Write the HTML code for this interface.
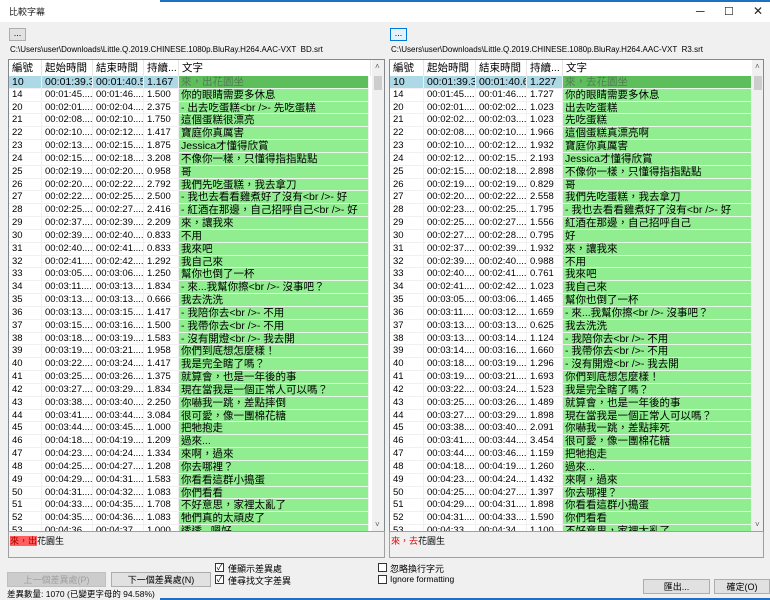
<!DOCTYPE html><html><head><meta charset="utf-8"><style>
*{margin:0;padding:0;box-sizing:border-box}
body{width:770px;height:600px;overflow:hidden;background:#f0f0f0;font-family:"Liberation Sans","Noto Sans CJK TC",sans-serif;position:relative;color:#000}
.abs{position:absolute}
.title{left:0;top:0;width:770px;height:22px;background:#fff}
.blue{left:160px;top:0;width:610px;height:2px;background:#1e6fc6}
.tt{left:9px;top:5px;font-size:9px;color:#222}
.ctl{top:4px;font-size:12px;color:#222}
.btn{background:#e1e1e1;border:1px solid #adadad;font-size:9px;text-align:center;line-height:14px}
.path{font-size:8px;color:#000;white-space:nowrap}
.list{border:1px solid #828790;background:#fff;overflow:hidden}
.hdr{position:absolute;left:0;top:0;height:16px;display:flex;font-size:10.5px;line-height:16px;color:#000}
.hdr div{padding-left:3px;border-right:1px solid #e5e5e5;white-space:nowrap;overflow:hidden}
.rows{position:absolute;left:0;top:16px}
.r{display:flex;height:12.83px;font-size:9.5px;line-height:12.83px;white-space:nowrap}
.r div{overflow:hidden;padding-left:3px;border-right:1px solid #f0f0f0;border-bottom:1px solid #f0f0f0}
.r div:last-child{background:#90ee90;font-size:10.5px;border-bottom:1px solid #e9f7e9;padding-left:2px}
.r.s div{background:#add8e6;font-size:10.5px}
.r.s div:last-child{background:#5cbf5c;color:#557a55}
.sb{position:absolute;top:0;width:12px;bottom:0;background:#f0f0f0}
.thumb{position:absolute;left:2px;top:16px;width:8px;height:14px;background:#cdcdcd}
.tb{background:#f0f0f0;border:1px solid #a0a0a0;font-size:9px;padding:2px 1px}
.cb{width:9px;height:9px;border:1px solid #333;background:#fff;font-size:8px;line-height:7px;text-align:center}
.lbl{font-size:9px}
</style></head><body>
<div class="abs title"></div><div class="abs blue"></div>
<div class="abs tt">比較字幕</div>
<div class="abs ctl" style="left:696px">─</div>
<div class="abs ctl" style="left:724px;font-size:11px;top:5px">☐</div>
<div class="abs ctl" style="left:753px">✕</div>

<div class="abs btn" style="left:9px;top:28px;width:17px;height:13px;line-height:8px">...</div>
<div class="abs btn" style="left:390px;top:28px;width:17px;height:13px;line-height:8px;border-color:#0078d7;background:#e5f1fb">...</div>
<div class="abs path" style="left:10px;top:45px">C:\Users\user\Downloads\Little.Q.2019.CHINESE.1080p.BluRay.H264.AAC-VXT&nbsp; BD.srt</div>
<div class="abs path" style="left:391px;top:45px">C:\Users\user\Downloads\Little.Q.2019.CHINESE.1080p.BluRay.H264.AAC-VXT&nbsp; R3.srt</div>

<!-- LEFT LIST -->
<div class="abs list" style="left:8px;top:59px;width:377px;height:473px">
<div class="hdr"><div style="width:33px">編號</div><div style="width:51px">起始時間</div><div style="width:51px">結束時間</div><div style="width:35px">持續...</div><div style="width:192px">文字</div></div>
<div class="rows">
<div class="r s"><div style="width:33px">10</div><div style="width:51px">00:01:39.33</div><div style="width:51px">00:01:40.50</div><div style="width:35px">1.167</div><div style="width:190px">來，出花園坐</div></div>
<div class="r"><div style="width:33px">14</div><div style="width:51px">00:01:45....</div><div style="width:51px">00:01:46....</div><div style="width:35px">1.500</div><div style="width:190px">你的眼睛需要多休息</div></div>
<div class="r"><div style="width:33px">20</div><div style="width:51px">00:02:01....</div><div style="width:51px">00:02:04....</div><div style="width:35px">2.375</div><div style="width:190px">- 出去吃蛋糕&lt;br /&gt;- 先吃蛋糕</div></div>
<div class="r"><div style="width:33px">21</div><div style="width:51px">00:02:08....</div><div style="width:51px">00:02:10....</div><div style="width:35px">1.750</div><div style="width:190px">這個蛋糕很漂亮</div></div>
<div class="r"><div style="width:33px">22</div><div style="width:51px">00:02:10....</div><div style="width:51px">00:02:12....</div><div style="width:35px">1.417</div><div style="width:190px">寶庭你真厲害</div></div>
<div class="r"><div style="width:33px">23</div><div style="width:51px">00:02:13....</div><div style="width:51px">00:02:15....</div><div style="width:35px">1.875</div><div style="width:190px">Jessica才懂得欣賞</div></div>
<div class="r"><div style="width:33px">24</div><div style="width:51px">00:02:15....</div><div style="width:51px">00:02:18....</div><div style="width:35px">3.208</div><div style="width:190px">不像你一樣，只懂得指指點點</div></div>
<div class="r"><div style="width:33px">25</div><div style="width:51px">00:02:19....</div><div style="width:51px">00:02:20....</div><div style="width:35px">0.958</div><div style="width:190px">哥</div></div>
<div class="r"><div style="width:33px">26</div><div style="width:51px">00:02:20....</div><div style="width:51px">00:02:22....</div><div style="width:35px">2.792</div><div style="width:190px">我們先吃蛋糕，我去拿刀</div></div>
<div class="r"><div style="width:33px">27</div><div style="width:51px">00:02:22....</div><div style="width:51px">00:02:25....</div><div style="width:35px">2.500</div><div style="width:190px">- 我也去看看雞煮好了沒有&lt;br /&gt;- 好</div></div>
<div class="r"><div style="width:33px">28</div><div style="width:51px">00:02:25....</div><div style="width:51px">00:02:27....</div><div style="width:35px">2.416</div><div style="width:190px">- 紅酒在那邊，自己招呼自己&lt;br /&gt;- 好</div></div>
<div class="r"><div style="width:33px">29</div><div style="width:51px">00:02:37....</div><div style="width:51px">00:02:39....</div><div style="width:35px">2.209</div><div style="width:190px">來，讓我來</div></div>
<div class="r"><div style="width:33px">30</div><div style="width:51px">00:02:39....</div><div style="width:51px">00:02:40....</div><div style="width:35px">0.833</div><div style="width:190px">不用</div></div>
<div class="r"><div style="width:33px">31</div><div style="width:51px">00:02:40....</div><div style="width:51px">00:02:41....</div><div style="width:35px">0.833</div><div style="width:190px">我來吧</div></div>
<div class="r"><div style="width:33px">32</div><div style="width:51px">00:02:41....</div><div style="width:51px">00:02:42....</div><div style="width:35px">1.292</div><div style="width:190px">我自己來</div></div>
<div class="r"><div style="width:33px">33</div><div style="width:51px">00:03:05....</div><div style="width:51px">00:03:06....</div><div style="width:35px">1.250</div><div style="width:190px">幫你也倒了一杯</div></div>
<div class="r"><div style="width:33px">34</div><div style="width:51px">00:03:11....</div><div style="width:51px">00:03:13....</div><div style="width:35px">1.834</div><div style="width:190px">- 來...我幫你擦&lt;br /&gt;- 沒事吧？</div></div>
<div class="r"><div style="width:33px">35</div><div style="width:51px">00:03:13....</div><div style="width:51px">00:03:13....</div><div style="width:35px">0.666</div><div style="width:190px">我去洗洗</div></div>
<div class="r"><div style="width:33px">36</div><div style="width:51px">00:03:13....</div><div style="width:51px">00:03:15....</div><div style="width:35px">1.417</div><div style="width:190px">- 我陪你去&lt;br /&gt;- 不用</div></div>
<div class="r"><div style="width:33px">37</div><div style="width:51px">00:03:15....</div><div style="width:51px">00:03:16....</div><div style="width:35px">1.500</div><div style="width:190px">- 我帶你去&lt;br /&gt;- 不用</div></div>
<div class="r"><div style="width:33px">38</div><div style="width:51px">00:03:18....</div><div style="width:51px">00:03:19....</div><div style="width:35px">1.583</div><div style="width:190px">- 沒有開燈&lt;br /&gt;- 我去開</div></div>
<div class="r"><div style="width:33px">39</div><div style="width:51px">00:03:19....</div><div style="width:51px">00:03:21....</div><div style="width:35px">1.958</div><div style="width:190px">你們到底想怎麼樣！</div></div>
<div class="r"><div style="width:33px">40</div><div style="width:51px">00:03:22....</div><div style="width:51px">00:03:24....</div><div style="width:35px">1.417</div><div style="width:190px">我是完全瞎了嗎？</div></div>
<div class="r"><div style="width:33px">41</div><div style="width:51px">00:03:25....</div><div style="width:51px">00:03:26....</div><div style="width:35px">1.375</div><div style="width:190px">就算會，也是一年後的事</div></div>
<div class="r"><div style="width:33px">42</div><div style="width:51px">00:03:27....</div><div style="width:51px">00:03:29....</div><div style="width:35px">1.834</div><div style="width:190px">現在當我是一個正常人可以嗎？</div></div>
<div class="r"><div style="width:33px">43</div><div style="width:51px">00:03:38....</div><div style="width:51px">00:03:40....</div><div style="width:35px">2.250</div><div style="width:190px">你嚇我一跳，差點摔倒</div></div>
<div class="r"><div style="width:33px">44</div><div style="width:51px">00:03:41....</div><div style="width:51px">00:03:44....</div><div style="width:35px">3.084</div><div style="width:190px">很可愛，像一團棉花糖</div></div>
<div class="r"><div style="width:33px">45</div><div style="width:51px">00:03:44....</div><div style="width:51px">00:03:45....</div><div style="width:35px">1.000</div><div style="width:190px">把牠抱走</div></div>
<div class="r"><div style="width:33px">46</div><div style="width:51px">00:04:18....</div><div style="width:51px">00:04:19....</div><div style="width:35px">1.209</div><div style="width:190px">過來...</div></div>
<div class="r"><div style="width:33px">47</div><div style="width:51px">00:04:23....</div><div style="width:51px">00:04:24....</div><div style="width:35px">1.334</div><div style="width:190px">來啊，過來</div></div>
<div class="r"><div style="width:33px">48</div><div style="width:51px">00:04:25....</div><div style="width:51px">00:04:27....</div><div style="width:35px">1.208</div><div style="width:190px">你去哪裡？</div></div>
<div class="r"><div style="width:33px">49</div><div style="width:51px">00:04:29....</div><div style="width:51px">00:04:31....</div><div style="width:35px">1.583</div><div style="width:190px">你看看這群小搗蛋</div></div>
<div class="r"><div style="width:33px">50</div><div style="width:51px">00:04:31....</div><div style="width:51px">00:04:32....</div><div style="width:35px">1.083</div><div style="width:190px">你們看看</div></div>
<div class="r"><div style="width:33px">51</div><div style="width:51px">00:04:33....</div><div style="width:51px">00:04:35....</div><div style="width:35px">1.708</div><div style="width:190px">不好意思，家裡太亂了</div></div>
<div class="r"><div style="width:33px">52</div><div style="width:51px">00:04:35....</div><div style="width:51px">00:04:36....</div><div style="width:35px">1.083</div><div style="width:190px">牠們真的太頑皮了</div></div>
<div class="r"><div style="width:33px">53</div><div style="width:51px">00:04:36....</div><div style="width:51px">00:04:37....</div><div style="width:35px">1.000</div><div style="width:190px">透透...嗯好</div></div>
</div>
<div class="sb" style="left:363px"><div class="abs" style="left:3px;top:2px;font-size:8px;color:#606060">˄</div><div class="thumb"></div><div class="abs" style="left:3px;bottom:2px;font-size:8px;color:#606060">˅</div></div>
</div>

<!-- RIGHT LIST -->
<div class="abs list" style="left:389px;top:59px;width:375px;height:473px">
<div class="hdr"><div style="width:34px">編號</div><div style="width:52px">起始時間</div><div style="width:51px">結束時間</div><div style="width:36px">持續...</div><div style="width:190px">文字</div></div>
<div class="rows">
<div class="r s"><div style="width:34px">10</div><div style="width:52px">00:01:39.39</div><div style="width:51px">00:01:40.62</div><div style="width:36px">1.227</div><div style="width:189px">來，去花園坐</div></div>
<div class="r"><div style="width:34px">14</div><div style="width:52px">00:01:45....</div><div style="width:51px">00:01:46....</div><div style="width:36px">1.727</div><div style="width:189px">你的眼睛需要多休息</div></div>
<div class="r"><div style="width:34px">20</div><div style="width:52px">00:02:01....</div><div style="width:51px">00:02:02....</div><div style="width:36px">1.023</div><div style="width:189px">出去吃蛋糕</div></div>
<div class="r"><div style="width:34px">21</div><div style="width:52px">00:02:02....</div><div style="width:51px">00:02:03....</div><div style="width:36px">1.023</div><div style="width:189px">先吃蛋糕</div></div>
<div class="r"><div style="width:34px">22</div><div style="width:52px">00:02:08....</div><div style="width:51px">00:02:10....</div><div style="width:36px">1.966</div><div style="width:189px">這個蛋糕真漂亮啊</div></div>
<div class="r"><div style="width:34px">23</div><div style="width:52px">00:02:10....</div><div style="width:51px">00:02:12....</div><div style="width:36px">1.932</div><div style="width:189px">寶庭你真厲害</div></div>
<div class="r"><div style="width:34px">24</div><div style="width:52px">00:02:12....</div><div style="width:51px">00:02:15....</div><div style="width:36px">2.193</div><div style="width:189px">Jessica才懂得欣賞</div></div>
<div class="r"><div style="width:34px">25</div><div style="width:52px">00:02:15....</div><div style="width:51px">00:02:18....</div><div style="width:36px">2.898</div><div style="width:189px">不像你一樣，只懂得指指點點</div></div>
<div class="r"><div style="width:34px">26</div><div style="width:52px">00:02:19....</div><div style="width:51px">00:02:19....</div><div style="width:36px">0.829</div><div style="width:189px">哥</div></div>
<div class="r"><div style="width:34px">27</div><div style="width:52px">00:02:20....</div><div style="width:51px">00:02:22....</div><div style="width:36px">2.558</div><div style="width:189px">我們先吃蛋糕，我去拿刀</div></div>
<div class="r"><div style="width:34px">28</div><div style="width:52px">00:02:23....</div><div style="width:51px">00:02:25....</div><div style="width:36px">1.795</div><div style="width:189px">- 我也去看看雞煮好了沒有&lt;br /&gt;- 好</div></div>
<div class="r"><div style="width:34px">29</div><div style="width:52px">00:02:25....</div><div style="width:51px">00:02:27....</div><div style="width:36px">1.556</div><div style="width:189px">紅酒在那邊，自己招呼自己</div></div>
<div class="r"><div style="width:34px">30</div><div style="width:52px">00:02:27....</div><div style="width:51px">00:02:28....</div><div style="width:36px">0.795</div><div style="width:189px">好</div></div>
<div class="r"><div style="width:34px">31</div><div style="width:52px">00:02:37....</div><div style="width:51px">00:02:39....</div><div style="width:36px">1.932</div><div style="width:189px">來，讓我來</div></div>
<div class="r"><div style="width:34px">32</div><div style="width:52px">00:02:39....</div><div style="width:51px">00:02:40....</div><div style="width:36px">0.988</div><div style="width:189px">不用</div></div>
<div class="r"><div style="width:34px">33</div><div style="width:52px">00:02:40....</div><div style="width:51px">00:02:41....</div><div style="width:36px">0.761</div><div style="width:189px">我來吧</div></div>
<div class="r"><div style="width:34px">34</div><div style="width:52px">00:02:41....</div><div style="width:51px">00:02:42....</div><div style="width:36px">1.023</div><div style="width:189px">我自己來</div></div>
<div class="r"><div style="width:34px">35</div><div style="width:52px">00:03:05....</div><div style="width:51px">00:03:06....</div><div style="width:36px">1.465</div><div style="width:189px">幫你也倒了一杯</div></div>
<div class="r"><div style="width:34px">36</div><div style="width:52px">00:03:11....</div><div style="width:51px">00:03:12....</div><div style="width:36px">1.659</div><div style="width:189px">- 來...我幫你擦&lt;br /&gt;- 沒事吧？</div></div>
<div class="r"><div style="width:34px">37</div><div style="width:52px">00:03:13....</div><div style="width:51px">00:03:13....</div><div style="width:36px">0.625</div><div style="width:189px">我去洗洗</div></div>
<div class="r"><div style="width:34px">38</div><div style="width:52px">00:03:13....</div><div style="width:51px">00:03:14....</div><div style="width:36px">1.124</div><div style="width:189px">- 我陪你去&lt;br /&gt;- 不用</div></div>
<div class="r"><div style="width:34px">39</div><div style="width:52px">00:03:14....</div><div style="width:51px">00:03:16....</div><div style="width:36px">1.660</div><div style="width:189px">- 我帶你去&lt;br /&gt;- 不用</div></div>
<div class="r"><div style="width:34px">40</div><div style="width:52px">00:03:18....</div><div style="width:51px">00:03:19....</div><div style="width:36px">1.296</div><div style="width:189px">- 沒有開燈&lt;br /&gt;- 我去開</div></div>
<div class="r"><div style="width:34px">41</div><div style="width:52px">00:03:19....</div><div style="width:51px">00:03:21....</div><div style="width:36px">1.693</div><div style="width:189px">你們到底想怎麼樣！</div></div>
<div class="r"><div style="width:34px">42</div><div style="width:52px">00:03:22....</div><div style="width:51px">00:03:24....</div><div style="width:36px">1.523</div><div style="width:189px">我是完全瞎了嗎？</div></div>
<div class="r"><div style="width:34px">43</div><div style="width:52px">00:03:25....</div><div style="width:51px">00:03:26....</div><div style="width:36px">1.489</div><div style="width:189px">就算會，也是一年後的事</div></div>
<div class="r"><div style="width:34px">44</div><div style="width:52px">00:03:27....</div><div style="width:51px">00:03:29....</div><div style="width:36px">1.898</div><div style="width:189px">現在當我是一個正常人可以嗎？</div></div>
<div class="r"><div style="width:34px">45</div><div style="width:52px">00:03:38....</div><div style="width:51px">00:03:40....</div><div style="width:36px">2.091</div><div style="width:189px">你嚇我一跳，差點摔死</div></div>
<div class="r"><div style="width:34px">46</div><div style="width:52px">00:03:41....</div><div style="width:51px">00:03:44....</div><div style="width:36px">3.454</div><div style="width:189px">很可愛，像一團棉花糖</div></div>
<div class="r"><div style="width:34px">47</div><div style="width:52px">00:03:44....</div><div style="width:51px">00:03:46....</div><div style="width:36px">1.159</div><div style="width:189px">把牠抱走</div></div>
<div class="r"><div style="width:34px">48</div><div style="width:52px">00:04:18....</div><div style="width:51px">00:04:19....</div><div style="width:36px">1.260</div><div style="width:189px">過來...</div></div>
<div class="r"><div style="width:34px">49</div><div style="width:52px">00:04:23....</div><div style="width:51px">00:04:24....</div><div style="width:36px">1.432</div><div style="width:189px">來啊，過來</div></div>
<div class="r"><div style="width:34px">50</div><div style="width:52px">00:04:25....</div><div style="width:51px">00:04:27....</div><div style="width:36px">1.397</div><div style="width:189px">你去哪裡？</div></div>
<div class="r"><div style="width:34px">51</div><div style="width:52px">00:04:29....</div><div style="width:51px">00:04:31....</div><div style="width:36px">1.898</div><div style="width:189px">你看看這群小搗蛋</div></div>
<div class="r"><div style="width:34px">52</div><div style="width:52px">00:04:31....</div><div style="width:51px">00:04:33....</div><div style="width:36px">1.590</div><div style="width:189px">你們看看</div></div>
<div class="r"><div style="width:34px">53</div><div style="width:52px">00:04:33....</div><div style="width:51px">00:04:34....</div><div style="width:36px">1.100</div><div style="width:189px">不好意思，家裡太亂了</div></div>
</div>
<div class="sb" style="left:362px"><div class="abs" style="left:3px;top:2px;font-size:8px;color:#606060">˄</div><div class="thumb"></div><div class="abs" style="left:3px;bottom:2px;font-size:8px;color:#606060">˅</div></div>
</div>

<div class="abs tb" style="left:8px;top:531px;width:377px;height:27px"><span style="background:#ff5f5f;color:#a00">來，出</span>花園生</div>
<div class="abs tb" style="left:389px;top:531px;width:375px;height:27px"><span style="color:#e00">來，去</span>花園生</div>

<div class="abs cb" style="left:215px;top:563px">✓</div><div class="abs lbl" style="left:228px;top:562px">僅顯示差異處</div>
<div class="abs cb" style="left:215px;top:575px">✓</div><div class="abs lbl" style="left:228px;top:574px">僅尋找文字差異</div>
<div class="abs cb" style="left:378px;top:563px"></div><div class="abs lbl" style="left:390px;top:562px">忽略換行字元</div>
<div class="abs cb" style="left:378px;top:575px"></div><div class="abs lbl" style="left:390px;top:574px;font-size:8.5px">Ignore formatting</div>

<div class="abs btn" style="left:7px;top:572px;width:99px;height:15px;background:#ccc;border-color:#bfbfbf;color:#a0a0a0">上一個差異處(P)</div>
<div class="abs btn" style="left:111px;top:572px;width:100px;height:15px">下一個差異處(N)</div>
<div class="abs btn" style="left:643px;top:579px;width:67px;height:15px">匯出...</div>
<div class="abs btn" style="left:714px;top:579px;width:56px;height:15px">確定(O)</div>
<div class="abs" style="left:7px;top:588px;font-size:8.5px">差異數量: 1070 (已變更字母的 94.58%)</div>
<div class="abs" style="left:160px;top:598px;width:610px;height:2px;background:#1e6fc6"></div>
</body></html>
